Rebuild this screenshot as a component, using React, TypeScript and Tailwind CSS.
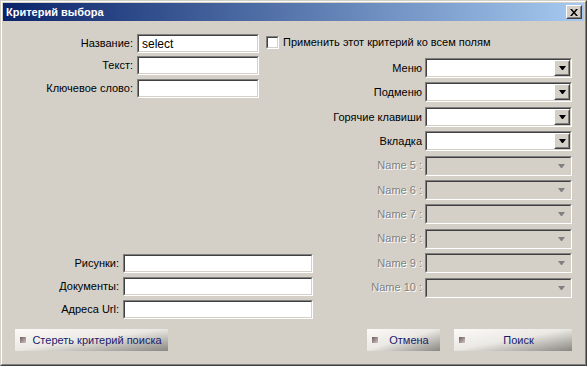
import type { ReactNode } from "react";

const Sunken = ({
    className,
    inner,
    children,
}: {
    className: string;
    inner: string;
    children?: ReactNode;
}) => (
    <div
        className={`border border-t-[#808080] border-l-[#808080] border-b-white border-r-white ${className}`}
    >
        <div
            className={`h-full border border-t-[#404040] border-l-[#404040] border-b-[#d4d0c8] border-r-[#d4d0c8] ${inner}`}
        >
            {children}
        </div>
    </div>
);

const TextField = ({ width, value }: { width: string; value?: string }) => (
    <Sunken className={`${width} h-[19px]`} inner="bg-white flex items-center pl-[3px]">
        <span className="text-[12px] text-black leading-none">{value}</span>
    </Sunken>
);

const Arrow = ({ color }: { color: string }) => (
    <svg width="7" height="4" viewBox="0 0 7 4" aria-hidden="true">
        <polygon points="0,0 7,0 4,4 3,4" fill={color} />
    </svg>
);

const Combo = ({ disabled }: { disabled?: boolean }) =>
    disabled ? (
        <Sunken className="w-[147px] h-[20px]" inner="bg-[#d4d0c8] flex justify-end items-center pr-[5px]">
            <Arrow color="#808080" />
        </Sunken>
    ) : (
        <Sunken className="w-[147px] h-[20px]" inner="bg-white flex justify-end">
            <div className="w-[16px] h-full border border-t-white border-l-white border-b-[#404040] border-r-[#404040] bg-[#d4d0c8]">
                <div className="h-full border border-t-[#d4d0c8] border-l-[#d4d0c8] border-b-[#808080] border-r-[#808080] flex items-center justify-center">
                    <Arrow color="#000" />
                </div>
            </div>
        </Sunken>
    );

const FlatButton = ({ label, width }: { label: string; width: string }) => (
    <button
        className={`flex items-center h-[22px] ${width} pl-[5px] bg-[linear-gradient(to_bottom_right,#fbfaf8_0%,#ebe9e4_48%,#8a8782_100%)] text-[#1a1a6c] text-[11px]`}
    >
        <span className="w-[6px] h-[6px] bg-[linear-gradient(to_bottom_right,#6f5c5c,#cfc4c4)]" />
        <span className="flex-1 text-center">{label}</span>
    </button>
);

const combos = [
    { label: "Меню" },
    { label: "Подменю" },
    { label: "Горячие клавиши" },
    { label: "Вкладка" },
    { label: "Name 5 :", disabled: true },
    { label: "Name 6 :", disabled: true },
    { label: "Name 7 :", disabled: true },
    { label: "Name 8 :", disabled: true },
    { label: "Name 9 :", disabled: true },
    { label: "Name 10 :", disabled: true },
];

export default function App() {
    return (
        <div className="w-[587px] h-[366px] font-['Liberation_Sans',Arial,sans-serif] text-[11px] text-black border border-t-[#d4d0c8] border-l-[#d4d0c8] border-b-[#404040] border-r-[#404040] bg-[#d4d0c8]">
            <div className="h-full flex flex-col border border-t-white border-l-white border-b-[#808080] border-r-[#808080] p-[1px]">
                {/* title bar */}
                <div className="h-[18px] flex items-center pl-[3px] pr-[2px] bg-[linear-gradient(to_right,#0a246a,#a6caf0)]">
                    <span className="text-white font-bold text-[11px]">Критерий выбора</span>
                    <div className="ml-auto w-[16px] h-[14px] border border-t-white border-l-white border-b-[#404040] border-r-[#404040] bg-[#d4d0c8]">
                        <div className="h-full border border-t-[#d4d0c8] border-l-[#d4d0c8] border-b-[#808080] border-r-[#808080] flex items-center justify-center">
                            <svg width="8" height="7" viewBox="0 0 8 7" aria-hidden="true">
                                <path d="M0 0h2l2 2.4 2-2.4h2L5 3.5 8 7H6L4 4.6 2 7H0l3-3.5z" fill="#000" />
                            </svg>
                        </div>
                    </div>
                </div>

                {/* body */}
                <div className="flex-1 flex flex-col pt-[13px]">
                    <div className="flex items-center h-[19px]">
                        <span className="w-[130px] mr-[4px] text-right">Название:</span>
                        <TextField width="w-[122px]" value="select" />
                        <Sunken className="w-[13px] h-[13px] ml-[7px] -mt-[2px]" inner="bg-white" />
                        <span className="ml-[4px] -mt-[2px]">Применить этот критерий ко всем полям</span>
                    </div>

                    <div className="flex mt-[3px]">
                        <div className="flex flex-col">
                            <div className="flex flex-col gap-[4px]">
                                <div className="flex items-center">
                                    <span className="w-[130px] mr-[4px] text-right">Текст:</span>
                                    <TextField width="w-[122px]" />
                                </div>
                                <div className="flex items-center">
                                    <span className="w-[130px] mr-[4px] text-right">Ключевое слово:</span>
                                    <TextField width="w-[122px]" />
                                </div>
                            </div>
                            <div className="flex flex-col gap-[4px] mt-[156px]">
                                <div className="flex items-center">
                                    <span className="w-[116px] mr-[4px] text-right">Рисунки:</span>
                                    <TextField width="w-[190px]" />
                                </div>
                                <div className="flex items-center">
                                    <span className="w-[116px] mr-[4px] text-right">Документы:</span>
                                    <TextField width="w-[190px]" />
                                </div>
                                <div className="flex items-center">
                                    <span className="w-[116px] mr-[4px] text-right">Адреса Url:</span>
                                    <TextField width="w-[190px]" />
                                </div>
                            </div>
                        </div>

                        <div className="ml-auto mr-[12px] mt-[2px] flex flex-col gap-[4.4px]">
                            {combos.map((c) => (
                                <div key={c.label} className="flex items-center justify-end">
                                    <span
                                        className={
                                            c.disabled
                                                ? "mr-[3px] text-[#808080] [text-shadow:1px_1px_0_#fff]"
                                                : "mr-[3px]"
                                        }
                                    >
                                        {c.label}
                                    </span>
                                    <Combo disabled={c.disabled} />
                                </div>
                            ))}
                        </div>
                    </div>

                    <div className="flex items-center mt-[10px] pl-[12px] pr-[12px]">
                        <FlatButton label="Стереть критерий поиска" width="w-[153px]" />
                        <div className="ml-auto flex gap-[14px]">
                            <FlatButton label="Отмена" width="w-[73px]" />
                            <FlatButton label="Поиск" width="w-[118px]" />
                        </div>
                    </div>
                </div>
            </div>
        </div>
    );
}
